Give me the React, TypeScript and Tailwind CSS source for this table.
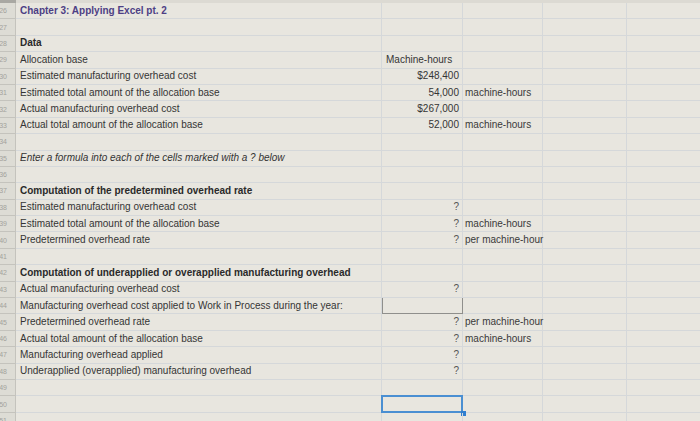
import React from "react";

type Row = {
  n: number;
  a?: string;
  aStyle?: "title" | "bold" | "italic";
  b?: string;
  bLeft?: boolean;
  c?: string;
  box?: boolean;
  sel?: boolean;
};

const rows: Row[] = [
  { n: 26, a: "Chapter 3: Applying Excel pt. 2", aStyle: "title" },
  { n: 27 },
  { n: 28, a: "Data", aStyle: "bold" },
  { n: 29, a: "Allocation base", b: "Machine-hours", bLeft: true },
  { n: 30, a: "Estimated manufacturing overhead cost", b: "$248,400" },
  { n: 31, a: "Estimated total amount of the allocation base", b: "54,000", c: "machine-hours" },
  { n: 32, a: "Actual manufacturing overhead cost", b: "$267,000" },
  { n: 33, a: "Actual total amount of the allocation base", b: "52,000", c: "machine-hours" },
  { n: 34 },
  { n: 35, a: "Enter a formula into each of the cells marked with a ? below", aStyle: "italic" },
  { n: 36 },
  { n: 37, a: "Computation of the predetermined overhead rate", aStyle: "bold" },
  { n: 38, a: "Estimated manufacturing overhead cost", b: "?" },
  { n: 39, a: "Estimated total amount of the allocation base", b: "?", c: "machine-hours" },
  { n: 40, a: "Predetermined overhead rate", b: "?", c: "per machine-hour" },
  { n: 41 },
  { n: 42, a: "Computation of underapplied or overapplied manufacturing overhead", aStyle: "bold" },
  { n: 43, a: "Actual manufacturing overhead cost", b: "?" },
  { n: 44, a: "Manufacturing overhead cost applied to Work in Process during the year:", box: true },
  { n: 45, a: "Predetermined overhead rate", b: "?", c: "per machine-hour" },
  { n: 46, a: "Actual total amount of the allocation base", b: "?", c: "machine-hours" },
  { n: 47, a: "Manufacturing overhead applied", b: "?" },
  { n: 48, a: "Underapplied (overapplied) manufacturing overhead", b: "?" },
  { n: 49 },
  { n: 50, sel: true },
  { n: 51 },
];

function aClass(s?: Row["aStyle"]) {
  if (s === "title") return "font-bold text-[10px] text-[#4d3f85]";
  if (s === "bold") return "font-bold text-[10px] text-[#2a2a2a]";
  if (s === "italic") return "italic text-[10px] text-[#333]";
  return "text-[10px] text-[#353535]";
}

export default function App() {
  return (
    <div
      className="w-[700px] h-[421px] overflow-hidden bg-[#e8e6df] flex flex-col"
      style={{ fontFamily: '"Liberation Sans", Arial, sans-serif' }}
    >
      <div className="h-[3px] shrink-0 flex">
        <div className="w-[16px] bg-[#a9a8a3]" />
        <div className="flex-1 bg-[#dcdad3]" />
      </div>
      {rows.map((r) => (
        <div key={r.n} className="h-[16.4px] shrink-0 flex leading-none">
          <div className="w-[16px] shrink-0 bg-[#dddcd5] border-r border-b border-[#c4c3bd] flex items-center justify-end pr-[8px] overflow-hidden">
            <span className="text-[7px] text-[#a3a29c] whitespace-nowrap">{r.n}</span>
          </div>
          <div className="w-[366px] shrink-0 border-r border-b border-[#d5d8da] flex items-center pl-[4px] whitespace-nowrap">
            {r.a && <span className={aClass(r.aStyle)}>{r.a}</span>}
          </div>
          <div
            className={
              "w-[81px] shrink-0 flex items-center whitespace-nowrap text-[10px] text-[#353535] relative " +
              (r.bLeft ? "justify-start pl-[4px] " : "justify-end pr-[3px] ") +
              (r.box
                ? "border-l border-r border-b border-[#8f8f8c]"
                : "border-r border-b border-[#d5d8da]")
            }
          >
            {r.b && <span className={r.b === "?" ? "text-[#555]" : ""}>{r.b}</span>}
            {r.sel && (
              <>
                <div className="absolute inset-[-1px] border-2 border-[#4a8fd2]" />
                <div className="absolute right-[-4px] bottom-[-4px] w-[5px] h-[5px] bg-[#2f7fd0]" />
              </>
            )}
          </div>
          <div className="w-[80px] shrink-0 border-r border-b border-[#d5d8da] flex items-center pl-[2px] whitespace-nowrap text-[10px] text-[#3a3a3a]">
            {r.c && <span>{r.c}</span>}
          </div>
          <div className="w-[84px] shrink-0 border-r border-b border-[#d5d8da]" />
          <div className="flex-1 border-b border-[#d5d8da]" />
        </div>
      ))}
    </div>
  );
}
